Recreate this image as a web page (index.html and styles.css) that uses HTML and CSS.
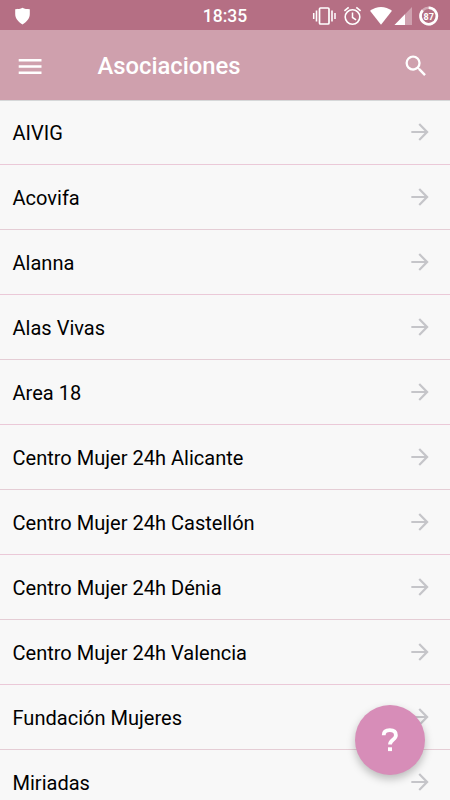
FILE: index.html
```html
<!DOCTYPE html>
<html lang="es">
<head>
<meta charset="utf-8">
<title>Asociaciones</title>
<link rel="stylesheet" href="styles.css">
</head>
<body>
<svg class="defs" width="0" height="0"><defs><symbol id="arrow" viewBox="0 0 24 24"><path d="M12 4l-1.41 1.41L16.17 11H4v2h12.17l-5.58 5.59L12 20l8-8z"/></symbol></defs></svg>
<div class="status">
  <svg class="shield" width="16" height="18" viewBox="0 0 16 18"><path d="M7.500 .8C5.500 2 3 2.200 .2 2.200v4.800c0 4.500 3.300 8.300 7.300 10.400 4-2.100 7.300-5.900 7.300-10.400V2.200C12 2.200 9.500 2 7.500 .8z" fill="#fff"/></svg>
  <span class="time">18:35</span>
  <svg class="indicators" width="138" height="30" viewBox="0 0 138 30">
    <g fill="none" stroke="#fff">
      <rect x="7.500" y="7" width="9.500" height="16" rx="1" stroke-width="1.700"/>
      <path d="M4.500 9.500v11M20 9.500v11" stroke-width="1.600"/>
      <path d="M1.700 12v6M23 12v6" stroke-width="1.500"/>
      <circle cx="40.500" cy="16" r="7.300" stroke-width="1.600"/>
      <path d="M40.500 11.500v5l3.600 2.300" stroke-width="1.500"/>
      <path d="M32.400 9.800l4.300-3.400M48.600 9.800l-4.300-3.400" stroke-width="1.700"/>
    </g>
    <path d="M58 9.800C64.500 4.700 73.500 4.700 80 9.800L69 23.700z" fill="#fff"/>
    <path d="M82.500 24L100 6v18z" fill="#fff" opacity=".35"/>
    <path d="M82.500 24L93 13.200V24z" fill="#fff"/>
    <circle cx="116.700" cy="15" r="8.200" fill="none" stroke="#fff" stroke-opacity=".4" stroke-width="2.600"/>
    <path d="M116.700 6.800a8.200 8.200 0 1 1-6 2.600" fill="none" stroke="#fff" stroke-width="2.600"/>
    <text x="116.700" y="18.500" text-anchor="middle" class="battery">87</text>
  </svg>
</div>
<header class="bar">
  <svg class="menu" width="24" height="16" viewBox="0 0 24 16"><path d="M.7 1h22.800v2.500H.7zM.7 7.200h22.800v2.500H.7zM.7 13.400h22.800v2.500H.7z" fill="#fff"/></svg>
  <h1>Asociaciones</h1>
  <svg class="search" width="28" height="28" viewBox="0 0 24 24"><path d="M15.500 14h-.79l-.28-.27A6.471 6.471 0 0 0 16 9.500 6.500 6.500 0 1 0 9.500 16c1.610 0 3.090-.59 4.230-1.570l.27.28v.79l5 4.990L20.490 19l-4.990-5zm-6 0C7.010 14 5 11.990 5 9.500S7.010 5 9.500 5 14 7.010 14 9.500 11.990 14 9.500 14z" fill="#fff"/></svg>
</header>
<ul class="list">
  <li>AIVIG<svg><use href="#arrow"/></svg></li>
  <li>Acovifa<svg><use href="#arrow"/></svg></li>
  <li>Alanna<svg><use href="#arrow"/></svg></li>
  <li>Alas Vivas<svg><use href="#arrow"/></svg></li>
  <li>Area 18<svg><use href="#arrow"/></svg></li>
  <li>Centro Mujer 24h Alicante<svg><use href="#arrow"/></svg></li>
  <li>Centro Mujer 24h Castellón<svg><use href="#arrow"/></svg></li>
  <li>Centro Mujer 24h Dénia<svg><use href="#arrow"/></svg></li>
  <li>Centro Mujer 24h Valencia<svg><use href="#arrow"/></svg></li>
  <li>Fundación Mujeres<svg><use href="#arrow"/></svg></li>
  <li>Miriadas<svg><use href="#arrow"/></svg></li>
</ul>
<button class="fab" aria-label="Ayuda"><svg width="18" height="26" viewBox="0 0 18 26"><path d="M2.700 8.200C2.700 4.700 5.300 3.200 8.800 3.200s6.100 1.600 6.100 5c0 4.500-5.900 4.600-5.900 9.200" fill="none" stroke="#fff" stroke-width="3.800"/><path d="M7 20.300h4v3.800H7z" fill="#fff"/></svg></button>
</body>
</html>
```

FILE: styles.css
```css
* { box-sizing: border-box; }
body {
  margin: 0;
  height: 800px;
  overflow: hidden;
  background: #f8f8f8;
  font-family: Roboto, "Liberation Sans", sans-serif;
  color: #000;
}
.defs { position: absolute; }
.status {
  height: 30px;
  background: #b56f84;
  display: grid;
  grid-template-columns: 138px 1fr 138px;
  align-items: center;
  color: #fff;
}
.shield { margin-left: 15px; }
.time {
  text-align: center;
  font-size: 17.5px;
  font-weight: 500;
  line-height: 30px;
  padding-top: 1px;
}
.battery {
  font-size: 9px;
  font-weight: 700;
  fill: #fff;
}
.bar {
  height: 70px;
  background: #cfa0ad;
  display: flex;
  align-items: center;
  padding: 2px 20px 0 18px;
}
.bar h1 {
  flex: 1;
  margin: 0 0 0 55.500px;
  color: #fff;
  font-size: 23.8px;
  font-weight: 500;
  line-height: 32px;
}
.search { flex: none; }
.list {
  margin: 0;
  padding: 0;
  list-style: none;
  box-shadow: inset 0 1px #d6d8d9;
}
.list li {
  height: 65px;
  padding: 1px 17px 0 12.500px;
  border-bottom: 1px solid #ebc9d8;
  display: flex;
  align-items: center;
  justify-content: space-between;
  font-size: 20.050px;
}
.list li:nth-child(even) { border-bottom-color: #e5cdd5; }
.list svg {
  width: 26px;
  height: 26px;
  margin-bottom: 1.500px;
  fill: #c5c5c9;
}
.fab {
  position: absolute;
  left: 355px;
  top: 705px;
  width: 70px;
  height: 70px;
  padding: 0;
  border: 0;
  border-radius: 50%;
  background: #d78db8;
  box-shadow: 0 4px 8px rgba(0, 0, 0, .25);
  display: flex;
  align-items: center;
  justify-content: center;
}
```
